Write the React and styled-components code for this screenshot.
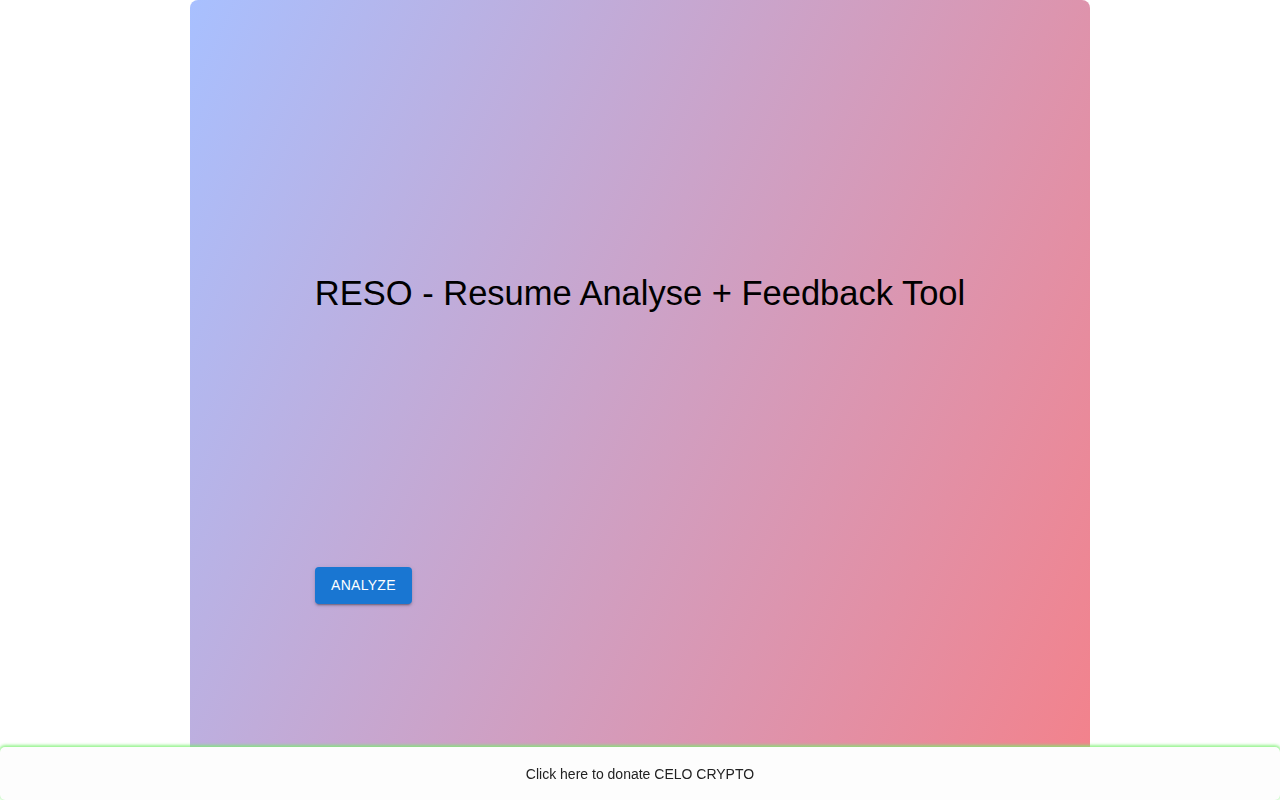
import React from "react";
import styled, { createGlobalStyle } from "styled-components";

const GlobalStyle = createGlobalStyle`
  body {
    margin: 0;
    background: #ffffff;
    font-family: "Liberation Sans", Arial, Helvetica, sans-serif;
  }
`;

function App() {
  return (
    <>
      <GlobalStyle />
      <Page>
        <Card>
          <Title>RESO - Resume Analyse + Feedback Tool</Title>
          <Actions>
            <AnalyzeButton>Analyze</AnalyzeButton>
          </Actions>
        </Card>
      </Page>
      <Footer>
        <DonateLink href="#">Click here to donate CELO CRYPTO</DonateLink>
      </Footer>
    </>
  );
}

export default App;

const Page = styled.div`
  display: flex;
  justify-content: center;
`;

const Card = styled.div`
  width: 900px;
  min-height: 100vh;
  box-sizing: border-box;
  padding: 272px 125px 0;
  border-radius: 8px 8px 0 0;
  background: linear-gradient(115deg, #a8c0ff, #f4818a);
  display: flex;
  flex-direction: column;
`;

const Title = styled.h1`
  margin: 0 -20px;
  font-size: 34.5px;
  font-weight: 400;
  line-height: 42px;
  color: #000;
  text-align: center;
  white-space: nowrap;
`;

const Actions = styled.div`
  margin-top: 253px;
  display: flex;
`;

const AnalyzeButton = styled.button`
  font-family: "Liberation Sans", Arial, Helvetica, sans-serif;
  font-size: 14px;
  font-weight: 400;
  letter-spacing: 0.3px;
  text-transform: uppercase;
  line-height: 24.5px;
  padding: 6px 16px;
  border: none;
  border-radius: 4px;
  background: #1976d2;
  color: #fff;
  cursor: pointer;
  box-shadow: 0 3px 1px -2px rgba(0, 0, 0, 0.2), 0 2px 2px 0 rgba(0, 0, 0, 0.14),
    0 1px 5px 0 rgba(0, 0, 0, 0.12);
`;

const Footer = styled.div`
  position: fixed;
  left: 0;
  right: 0;
  bottom: 0;
  height: 53px;
  background: #fdfdfd;
  border-radius: 5px;
  box-shadow: 0 -1px 3px 1px rgba(120, 240, 110, 0.75);
  display: flex;
  align-items: center;
  justify-content: center;
`;

const DonateLink = styled.a`
  font-size: 14px;
  color: #222;
  text-decoration: none;
`;
